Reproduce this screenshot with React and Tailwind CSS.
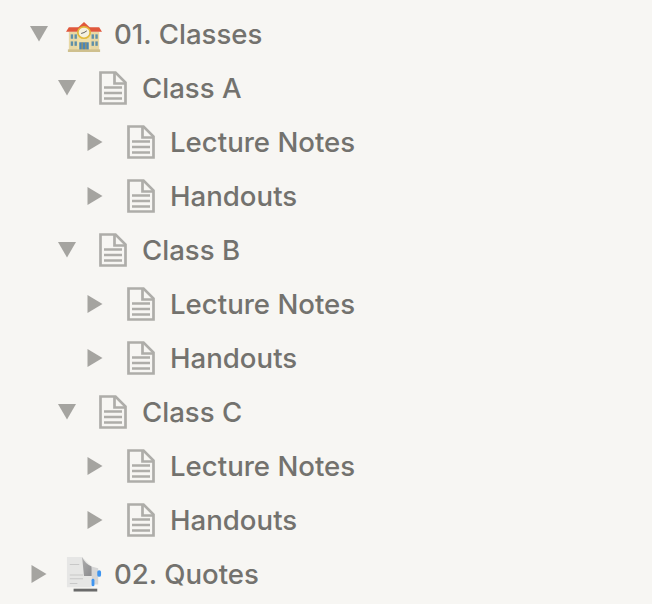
import React from 'react';

const Arrow = ({ open }) => (
  <svg width="18" height="18" viewBox="0 0 18 18" className="shrink-0">
    {open ? <polygon points="0,1 18,1 9,16.5" fill="#a5a4a0" /> : <polygon points="1.5,0 16.5,9 1.5,18" fill="#a5a4a0" />}
  </svg>
);

const DocIcon = () => (
  <svg width="28" height="34" viewBox="0 0 28 34" className="shrink-0">
    <path d="M1.5 1.5H16.5L26.5 11.5V32.5H1.5Z" fill="none" stroke="#aeada9" strokeWidth="2.7" />
    <path d="M15.5 1.5V12.5H26.5" fill="none" stroke="#aeada9" strokeWidth="2.7" />
    <path d="M5 16.5H23M5 22H23M5 27.5H23" stroke="#aeada9" strokeWidth="2.4" />
  </svg>
);

const SchoolIcon = () => (
  <svg width="36" height="30" viewBox="0 0 38 34" preserveAspectRatio="none" className="shrink-0">
    <rect x="3" y="11" width="32" height="21" fill="#e8d8a4" />
    <rect x="12" y="8" width="14" height="24" fill="#f0dfa8" />
    <path d="M0 11L3 6H13V11Z" fill="#e0583c" />
    <path d="M38 11L35 6H25V11Z" fill="#e0583c" />
    <path d="M11 8L19 0L27 8Z" fill="#e0583c" />
    <circle cx="19" cy="12" r="6.5" fill="#f4f0e0" stroke="#e2b93b" strokeWidth="1.8" />
    <path d="M19 12L22 10M19 12L16 13" stroke="#555" strokeWidth="1" />
    <rect x="14" y="23" width="10" height="9" fill="#4a86b8" />
    <path d="M17 23V32M21 23V32" stroke="#c79a3a" strokeWidth="1" />
    <g fill="#5f8fa8">
      <rect x="5" y="14" width="2.5" height="5" />
      <rect x="9" y="14" width="2.5" height="5" />
      <rect x="5" y="22" width="2.5" height="5" />
      <rect x="9" y="22" width="2.5" height="5" />
      <rect x="27" y="14" width="2.5" height="5" />
      <rect x="31" y="14" width="2.5" height="5" />
      <rect x="27" y="22" width="2.5" height="5" />
      <rect x="31" y="22" width="2.5" height="5" />
    </g>
    <rect x="2" y="31" width="34" height="3" fill="#cfc08e" />
  </svg>
);

const QuotesIcon = () => (
  <svg width="36" height="38" viewBox="0 0 38 38" className="shrink-0">
    <defs>
      <linearGradient id="fold" x1="0" y1="0" x2="1" y2="1">
        <stop offset="0" stopColor="#8f8f90" />
        <stop offset="1" stopColor="#55555a" />
      </linearGradient>
    </defs>
    <path d="M1 1H17L27 11V33H1Z" fill="#e6e6e5" />
    <path d="M17 1Q20 8 27 11L30 21H19Z" fill="url(#fold)" opacity="0.65" />
    <path d="M27 11L34 13V30H27Z" fill="#d6d6d6" />
    <path d="M8 36H33" stroke="#6a6a6a" strokeWidth="3" />
    <path d="M4 9H14M4 20H18M4 24H18M4 29H12" stroke="#c8c8c8" strokeWidth="1.2" />
    <rect x="33" y="15" width="4" height="7" rx="2" fill="#3f95f0" />
    <rect x="27" y="24" width="3" height="8" rx="1.5" fill="#3f95f0" />
  </svg>
);

const Row = ({ open, indent, icon, label }) => (
  <div className={`flex h-[54px] items-center font-medium text-[27.6px] text-[#73726e] ${indent}`}>
    <Arrow open={open} />
    {icon}
    <span className="whitespace-nowrap pt-[2px]">{label}</span>
  </div>
);

const Page = ({ label }) => (
  <Row
    indent="pl-[86px]"
    icon={<span className="ml-[23px] mr-[15px] flex"><DocIcon /></span>}
    label={label}
  />
);

const ClassGroup = ({ name }) => (
  <>
    <Row
      open
      indent="pl-[58px]"
      icon={<span className="ml-[23px] mr-[15px] flex"><DocIcon /></span>}
      label={name}
    />
    <Page label="Lecture Notes" />
    <Page label="Handouts" />
  </>
);

export default function App() {
  return (
    <div className="h-[604px] w-[652px] overflow-hidden bg-[#f7f6f3] pt-[7px] font-['Inter',sans-serif]">
      <Row
        open
        indent="pl-[30px]"
        icon={<span className="ml-[18px] mr-[12px] mt-[6px] flex"><SchoolIcon /></span>}
        label="01. Classes"
      />
      <ClassGroup name="Class A" />
      <ClassGroup name="Class B" />
      <ClassGroup name="Class C" />
      <Row
        indent="pl-[30px]"
        icon={<span className="ml-[18px] mr-[12px] flex"><QuotesIcon /></span>}
        label="02. Quotes"
      />
    </div>
  );
}
